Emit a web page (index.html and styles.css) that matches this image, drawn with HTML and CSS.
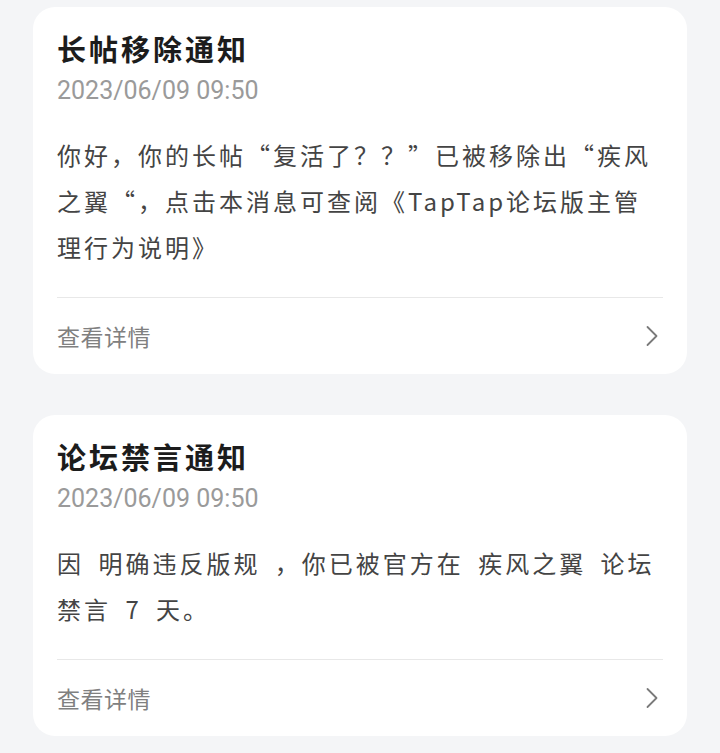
FILE: index.html
```html
<!DOCTYPE html>
<html lang="zh-CN">
<head>
    <meta charset="UTF-8">
    <meta name="viewport" content="width=device-width, initial-scale=1.0">
    <title>消息通知</title>
    <link rel="stylesheet" href="styles.css">
</head>
<body>
    <div class="notice-list">
        <div class="notice-card">
            <h2 class="notice-title">长帖移除通知</h2>
            <p class="notice-time">2023/06/09 09:50</p>
            <p class="notice-text">你好，你的长帖“复活了？？”已被移除出“疾风之翼“，点击本消息可查阅《TapTap论坛版主管理行为说明》</p>
            <div class="notice-footer">
                <span>查看详情</span>
                <svg class="arrow" width="14" height="22" viewBox="0 0 14 22">
                    <path d="M2.5 2 L11.5 11 L2.5 20" fill="none" stroke="#7a7a7a" stroke-width="1.8" stroke-linecap="round" stroke-linejoin="round"/>
                </svg>
            </div>
        </div>

        <div class="notice-card">
            <h2 class="notice-title">论坛禁言通知</h2>
            <p class="notice-time">2023/06/09 09:50</p>
            <p class="notice-text">因 明确违反版规 ，你已被官方在 疾风之翼 论坛禁言 7 天。</p>
            <div class="notice-footer">
                <span>查看详情</span>
                <svg class="arrow" width="14" height="22" viewBox="0 0 14 22">
                    <path d="M2.5 2 L11.5 11 L2.5 20" fill="none" stroke="#7a7a7a" stroke-width="1.8" stroke-linecap="round" stroke-linejoin="round"/>
                </svg>
            </div>
        </div>
    </div>
</body>
</html>
```

FILE: styles.css
```css
body {
    margin: 0;
    background-color: #f4f5f7;
    font-family: "Noto Sans CJK SC", "Noto Sans", sans-serif;
}

.notice-list {
    display: flex;
    flex-direction: column;
    gap: 41px;
    padding: 7px 33px;
}

.notice-card {
    background-color: #ffffff;
    border-radius: 22px;
    padding: 21px 24px 0;
}

.notice-title {
    margin: 0;
    font-size: 29px;
    line-height: 40px;
    font-weight: bold;
    letter-spacing: 3px;
    color: #1c1c1c;
}

.notice-time {
    margin: 6px 0 0;
    font-family: Roboto, "Noto Sans", sans-serif;
    font-size: 25px;
    line-height: 34px;
    color: #9a9a9a;
}

.notice-text {
    margin: 24px 0 0;
    padding-bottom: 27px;
    border-bottom: 1px solid #e8e8e8;
    font-size: 24px;
    line-height: 46px;
    letter-spacing: 3px;
    word-spacing: 6px;
    color: #444444;
}

.notice-footer {
    height: 76px;
    display: flex;
    align-items: center;
    justify-content: space-between;
    font-size: 23px;
    letter-spacing: 0.5px;
    color: #808080;
}

.arrow {
    margin-right: 4px;
}
```
